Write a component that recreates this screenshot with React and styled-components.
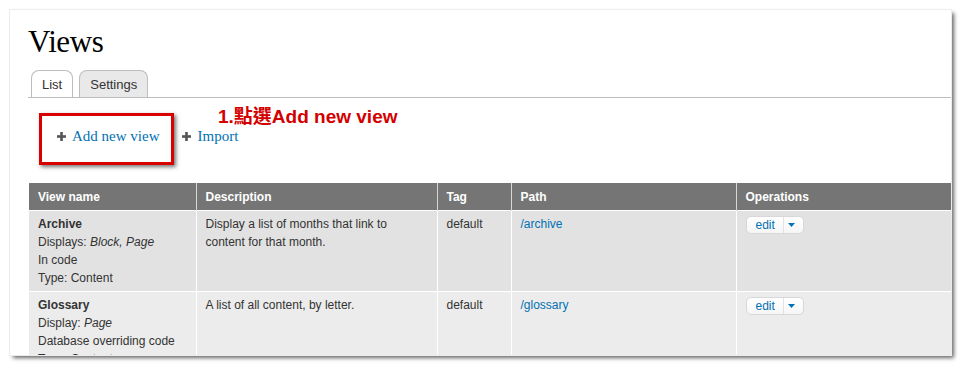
import React from "react";
import styled, { createGlobalStyle } from "styled-components";

const GlobalStyle = createGlobalStyle`
  html, body {
    margin: 0;
    padding: 0;
    background: #ffffff;
  }
`;

const Screen = styled.div`
  width: 962px;
  height: 366px;
  padding: 10px;
  box-sizing: border-box;
  background: #ffffff;
`;

const Page = styled.div`
  position: relative;
  width: 941px;
  height: 345px;
  overflow: hidden;
  background: #ffffff;
  box-shadow: 0 0 0 1px #ececec, 3px 3px 4px rgba(0, 0, 0, 0.6);
  padding-left: 18px;
  box-sizing: border-box;
`;

const Title = styled.h1`
  margin: 17px 0 0;
  font-family: "Liberation Serif", "Times New Roman", serif;
  font-weight: normal;
  font-size: 31px;
  line-height: 30px;
  letter-spacing: -0.4px;
  color: #000;
`;

const TabBar = styled.div`
  display: flex;
  gap: 6px;
  margin-top: 13px;
  padding-left: 3px;
  border-bottom: 1px solid #bdbdbd;
`;

const Tab = styled.div`
  height: 26px;
  padding: 0 10px;
  display: flex;
  align-items: center;
  border: 1px solid #bdbdbd;
  border-bottom: none;
  border-radius: 8px 8px 0 0;
  background: ${(p) => (p.$active ? "#ffffff" : "#e9e9e9")};
  font-family: "Liberation Sans", Arial, sans-serif;
  font-size: 13px;
  color: #333;
`;

const ActionBar = styled.div`
  display: flex;
  align-items: center;
  gap: 23px;
  height: 20px;
  padding: 28px 0 37px 29px;
`;

const ActionLink = styled.a`
  display: flex;
  align-items: center;
  gap: 6px;
  font-family: "Liberation Serif", "Times New Roman", serif;
  font-size: 15px;
  line-height: 20px;
  color: #0071b3;
  text-decoration: none;
`;

const Highlight = styled.div`
  position: absolute;
  left: 29px;
  top: 103px;
  width: 135px;
  height: 52px;
  box-sizing: border-box;
  border: 3px solid #d90000;
  box-shadow: 2px 2px 4px rgba(0, 0, 0, 0.55);
`;

const Note = styled.div`
  position: absolute;
  left: 208px;
  top: 96px;
  font-family: "Liberation Sans", Arial, "Noto Sans CJK TC", sans-serif;
  font-weight: bold;
  font-size: 19px;
  line-height: 22px;
  color: #d40000;
  white-space: nowrap;
`;

const Table = styled.table`
  margin-left: 1px;
  width: 940px;
  table-layout: fixed;
  border-collapse: collapse;
  font-family: "Liberation Sans", Arial, sans-serif;
  font-size: 12px;
  line-height: 18px;
  color: #333;
`;

const Th = styled.th`
  height: 27px;
  padding: 0 9px;
  background: #757575;
  color: #ffffff;
  font-weight: bold;
  text-align: left;
  border-left: 1px solid #d6d6d6;
  &:first-child {
    border-left: none;
  }
`;

const Row = styled.tr`
  background: ${(p) => (p.$odd ? "#e2e2e2" : "#ececec")};
  border-top: 1px solid #ffffff;
`;

const Td = styled.td`
  vertical-align: top;
  padding: 4px 9px 4px;
  border-left: 1px solid #ffffff;
  &:first-child {
    border-left: none;
  }
`;

const Name = styled.div`
  font-weight: bold;
`;

const PathLink = styled.a`
  color: #0071b3;
  text-decoration: none;
`;

const EditButton = styled.div`
  display: inline-flex;
  align-items: center;
  height: 16px;
  margin-top: 1px;
  border: 1px solid #d8d8d8;
  border-radius: 5px;
  background: linear-gradient(#ffffff, #f6f6f6);
  font-size: 12px;
  line-height: 16px;
`;

const EditLabel = styled.span`
  color: #0071b3;
  padding: 0 8px 0 9px;
  border-right: 1px solid #e2e2e2;
`;

const Caret = styled.span`
  display: flex;
  align-items: center;
  padding: 0 8px 0 4px;
`;

const Plus = () => (
  <svg width="9" height="9" viewBox="0 0 9 9">
    <rect x="3.2" y="0" width="2.6" height="9" fill="#555" />
    <rect x="0" y="3.2" width="9" height="2.6" fill="#555" />
  </svg>
);

const Edit = () => (
  <EditButton>
    <EditLabel>edit</EditLabel>
    <Caret>
      <svg width="7" height="4" viewBox="0 0 7 4">
        <path d="M0 0 L7 0 L3.5 4 Z" fill="#0071b3" />
      </svg>
    </Caret>
  </EditButton>
);

const views = [
  {
    name: "Archive",
    lines: [
      <>
        Displays: <i>Block, Page</i>
      </>,
      "In code",
      "Type: Content",
    ],
    desc: "Display a list of months that link to content for that month.",
    tag: "default",
    path: "/archive",
  },
  {
    name: "Glossary",
    lines: [
      <>
        Display: <i>Page</i>
      </>,
      "Database overriding code",
      "Type: Content",
    ],
    desc: "A list of all content, by letter.",
    tag: "default",
    path: "/glossary",
  },
];

export default function App() {
  return (
    <>
      <GlobalStyle />
      <Screen>
        <Page>
          <Title>Views</Title>
          <TabBar>
            <Tab $active>List</Tab>
            <Tab>Settings</Tab>
          </TabBar>

          <ActionBar>
            <ActionLink href="#">
              <Plus />
              Add new view
            </ActionLink>
            <ActionLink href="#">
              <Plus />
              Import
            </ActionLink>
          </ActionBar>

          <Table>
            <colgroup>
              <col style={{ width: 167 }} />
              <col style={{ width: 241 }} />
              <col style={{ width: 74 }} />
              <col style={{ width: 225 }} />
              <col />
            </colgroup>
            <thead>
              <tr>
                <Th>View name</Th>
                <Th>Description</Th>
                <Th>Tag</Th>
                <Th>Path</Th>
                <Th>Operations</Th>
              </tr>
            </thead>
            <tbody>
              {views.map((v, i) => (
                <Row key={v.name} $odd={i % 2 === 0}>
                  <Td>
                    <Name>{v.name}</Name>
                    {v.lines.map((l, j) => (
                      <div key={j}>{l}</div>
                    ))}
                  </Td>
                  <Td>{v.desc}</Td>
                  <Td>{v.tag}</Td>
                  <Td>
                    <PathLink href="#">{v.path}</PathLink>
                  </Td>
                  <Td>
                    <Edit />
                  </Td>
                </Row>
              ))}
            </tbody>
          </Table>

          <Highlight />
          <Note>1.點選Add new view</Note>
        </Page>
      </Screen>
    </>
  );
}
